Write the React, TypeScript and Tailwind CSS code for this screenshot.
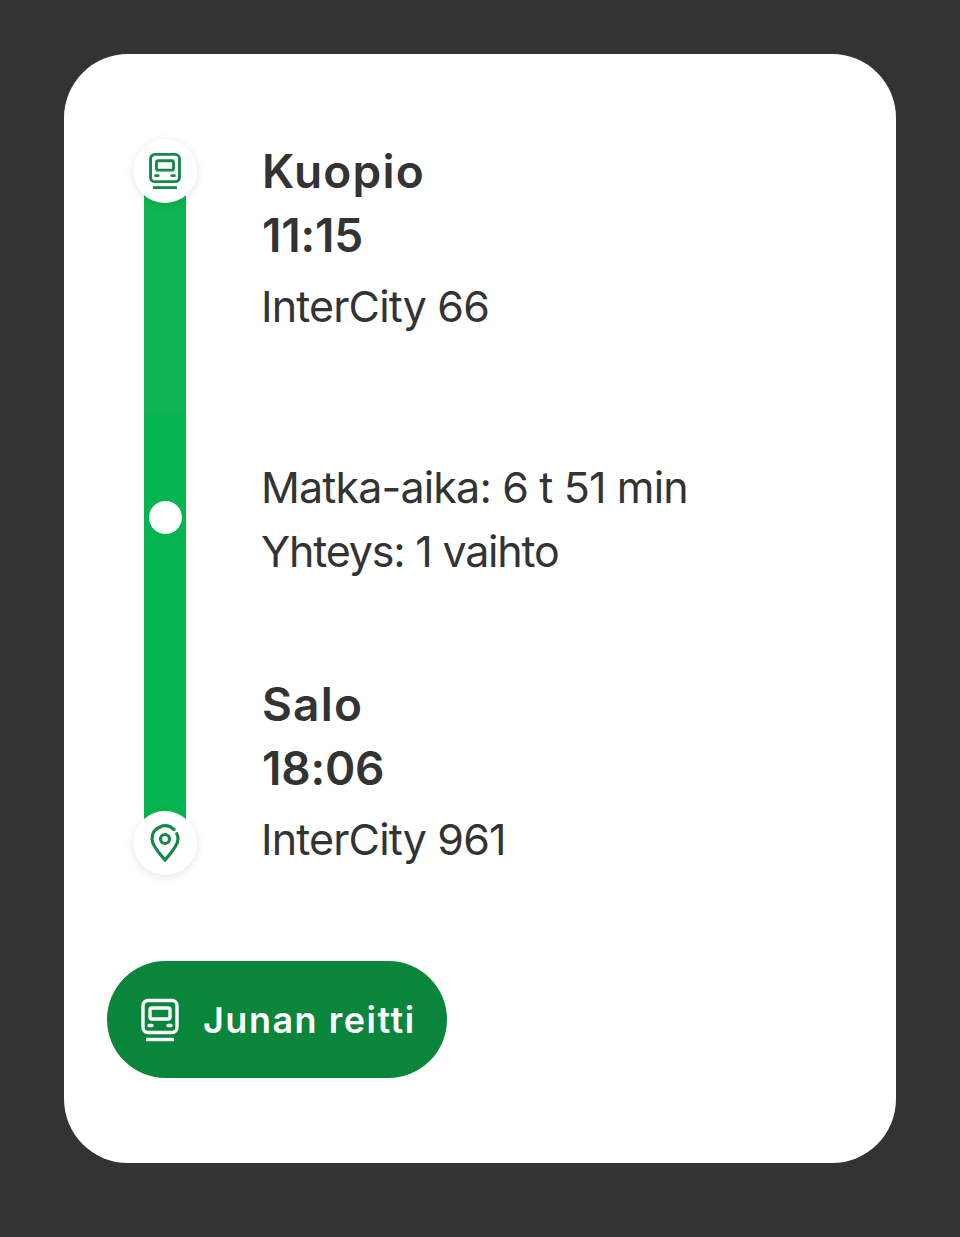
const TrainIcon = ({ className }: { className: string }) => (
  <svg viewBox="0 0 40 44" fill="none" stroke="currentColor" strokeWidth="3.4" className={className}>
    <path d="M8 2.500h24a5 5 0 0 1 5 5v22a5 5 0 0 1-5 5H8a5 5 0 0 1-5-5v-22a5 5 0 0 1 5-5Z" />
    <rect x="10" y="10" width="20" height="11" rx="2" />
    <path d="M9 27.500h3M28 27.500h3" strokeLinecap="round" />
    <path d="M6 41.500h28" />
  </svg>
);

const PinIcon = ({ className }: { className: string }) => (
  <svg viewBox="0 0 30 38" fill="none" stroke="currentColor" strokeWidth="3.200" className={className}>
    <path d="M24 5.500A13 13 0 0 0 2 15c0 7 8 15 13 21 5-6 13-14 13-21 0-2-.4-3.700-1.200-5.300" strokeLinecap="round" />
    <circle cx="15" cy="15" r="4.500" />
  </svg>
);

const Stop = ({ name, time, train }: { name: string; time: string; train: string }) => (
  <div>
    <div className="text-[46px] font-semibold leading-[64px] tracking-[1.2px]">{name}</div>
    <div className="text-[46px] font-semibold leading-[64px] tracking-[-0.2px]">{time}</div>
    <div className="-ml-px mt-[7px] text-[43px] leading-[64px] tracking-[-0.85px]">{train}</div>
  </div>
);

export default function App() {
  return (
    <div className="min-h-[1237px] bg-[#333333] px-16 pt-[54px] font-['Inter',sans-serif] text-[#333333]">
      <div className="h-[1109px] rounded-[64px] bg-white pl-[43px] pt-[85px]">
        <div className="flex gap-[65px] pl-[26px]">
          <div className="relative flex w-16 flex-col items-center">
            <div className="z-10 flex h-16 w-16 items-center justify-center rounded-full bg-white shadow-[0_2px_10px_rgba(0,0,0,0.1)]">
              <TrainIcon className="h-[38px] w-[34px] text-[#16884a]" />
            </div>
            <div className="-my-2 flex w-[42px] flex-1 flex-col">
              <div className="h-[220px] bg-[#0fb552]" />
              <div className="flex-1 bg-[#05b54f]" />
            </div>
            <div className="absolute top-[362px] z-10 h-[33px] w-[33px] rounded-full bg-white" />
            <div className="z-10 flex h-16 w-16 items-center justify-center rounded-full bg-white shadow-[0_2px_10px_rgba(0,0,0,0.1)]">
              <PinIcon className="h-[38px] w-[30px] text-[#16884a]" />
            </div>
          </div>
          <div className="pb-[4px]">
            <Stop name="Kuopio" time="11:15" train="InterCity 66" />
            <div className="-ml-px mt-[117px] text-[43px] leading-[64px] tracking-[-0.85px]">
              <div>Matka-aika: 6 t 51 min</div>
              <div className="tracking-[-1.2px]">Yhteys: 1 vaihto</div>
            </div>
            <div className="mt-[89px]">
              <Stop name="Salo" time="18:06" train="InterCity 961" />
            </div>
          </div>
        </div>
        <button className="mt-[86px] flex h-[117px] w-[340px] items-center gap-[23px] rounded-full bg-[#0a863c] pl-[33px] text-[36px] font-semibold text-white">
          <TrainIcon className="h-[44px] w-[40px] text-white" />
          <span className="tracking-[1.5px]">Junan reitti</span>
        </button>
      </div>
    </div>
  );
}
